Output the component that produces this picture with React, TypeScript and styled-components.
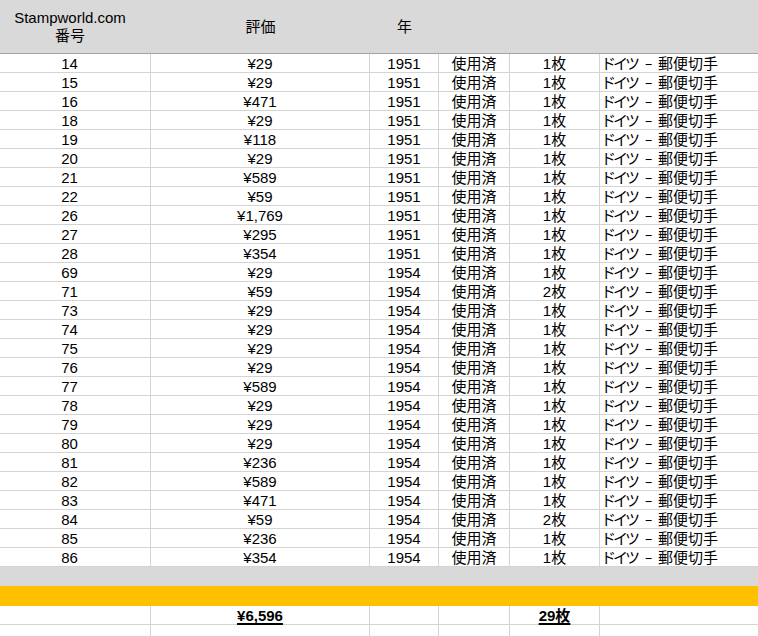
import React from "react";
import styled, { createGlobalStyle } from "styled-components";

const GlobalStyle = createGlobalStyle`
  html, body {
    margin: 0;
    padding: 0;
    background: #ffffff;
  }
  body {
    font-family: "Liberation Sans", "Noto Sans CJK JP", sans-serif;
    font-size: 15px;
    color: #000;
  }
`;

const COLS = "151px 219px 69px 71px 90px 1fr";

const Sheet = styled.div`
  width: 758px;
  height: 636px;
  overflow: hidden;
  display: flex;
  flex-direction: column;
`;

const HeaderRow = styled.div`
  display: grid;
  grid-template-columns: ${COLS};
  height: 54px;
  flex-shrink: 0;
  box-sizing: border-box;
  background: #d9d9d9;
  border-bottom: 1px solid #a3a3a3;
`;

const HeaderCell = styled.div<{ $shift?: boolean }>`
  display: flex;
  align-items: center;
  justify-content: center;
  text-align: center;
  line-height: 18px;
  padding-right: ${(p) => (p.$shift ? "11px" : "0")};
  padding-top: 1px;
`;

const Row = styled.div<{ $height?: number }>`
  display: grid;
  grid-template-columns: ${COLS};
  height: ${(p) => p.$height ?? 19}px;
  flex-shrink: 0;
`;

const Cell = styled.div<{ $align?: "center" | "left"; $shift?: boolean }>`
  box-sizing: border-box;
  border-right: 1px solid #d4d4d4;
  border-bottom: 1px solid #d4d4d4;
  display: flex;
  align-items: center;
  justify-content: ${(p) => (p.$align === "left" ? "flex-start" : "center")};
  padding-left: ${(p) => (p.$align === "left" ? "1px" : "0")};
  padding-right: ${(p) => (p.$shift ? "11px" : "0")};
  padding-top: 1px;
  line-height: 17px;
  white-space: nowrap;
  &:last-child {
    border-right: none;
  }
`;

const Kana = styled.span`
  letter-spacing: -3px;
`;

const Dash = styled.span`
  display: inline-block;
  width: 15px;
  transform: scaleX(0.55);
  margin: 0 2.5px 0 3.5px;
  font-family: "Noto Sans CJK JP", sans-serif;
`;

const Band = styled.div<{ $color: string; $height: number }>`
  height: ${(p) => p.$height}px;
  background: ${(p) => p.$color};
  flex-shrink: 0;
`;

const Total = styled.span`
  font-weight: bold;
  text-decoration: underline;
  text-decoration-thickness: 2px;
  text-underline-offset: 2px;
`;

type Item = { no: number; price: string; year: number; qty: number };

const items: Item[] = [
  { no: 14, price: "¥29", year: 1951, qty: 1 },
  { no: 15, price: "¥29", year: 1951, qty: 1 },
  { no: 16, price: "¥471", year: 1951, qty: 1 },
  { no: 18, price: "¥29", year: 1951, qty: 1 },
  { no: 19, price: "¥118", year: 1951, qty: 1 },
  { no: 20, price: "¥29", year: 1951, qty: 1 },
  { no: 21, price: "¥589", year: 1951, qty: 1 },
  { no: 22, price: "¥59", year: 1951, qty: 1 },
  { no: 26, price: "¥1,769", year: 1951, qty: 1 },
  { no: 27, price: "¥295", year: 1951, qty: 1 },
  { no: 28, price: "¥354", year: 1951, qty: 1 },
  { no: 69, price: "¥29", year: 1954, qty: 1 },
  { no: 71, price: "¥59", year: 1954, qty: 2 },
  { no: 73, price: "¥29", year: 1954, qty: 1 },
  { no: 74, price: "¥29", year: 1954, qty: 1 },
  { no: 75, price: "¥29", year: 1954, qty: 1 },
  { no: 76, price: "¥29", year: 1954, qty: 1 },
  { no: 77, price: "¥589", year: 1954, qty: 1 },
  { no: 78, price: "¥29", year: 1954, qty: 1 },
  { no: 79, price: "¥29", year: 1954, qty: 1 },
  { no: 80, price: "¥29", year: 1954, qty: 1 },
  { no: 81, price: "¥236", year: 1954, qty: 1 },
  { no: 82, price: "¥589", year: 1954, qty: 1 },
  { no: 83, price: "¥471", year: 1954, qty: 1 },
  { no: 84, price: "¥59", year: 1954, qty: 2 },
  { no: 85, price: "¥236", year: 1954, qty: 1 },
  { no: 86, price: "¥354", year: 1954, qty: 1 },
];

export default function App() {
  return (
    <>
      <GlobalStyle />
      <Sheet>
        <HeaderRow>
          <HeaderCell $shift>
            Stampworld.com
            <br />
            番号
          </HeaderCell>
          <HeaderCell>評価</HeaderCell>
          <HeaderCell>年</HeaderCell>
          <HeaderCell />
          <HeaderCell />
          <HeaderCell />
        </HeaderRow>
        {items.map((it) => (
          <Row key={it.no}>
            <Cell $shift>{it.no}</Cell>
            <Cell>{it.price}</Cell>
            <Cell>{it.year}</Cell>
            <Cell>使用済</Cell>
            <Cell>{it.qty}枚</Cell>
            <Cell $align="left">
              <Kana>ドイツ</Kana>
              <Dash>－</Dash>
              郵便切手
            </Cell>
          </Row>
        ))}
        <Band $color="#d9d9d9" $height={19} />
        <Band $color="#ffc000" $height={20} />
        <Row>
          <Cell $shift />
          <Cell>
            <Total>¥6,596</Total>
          </Cell>
          <Cell />
          <Cell />
          <Cell>
            <Total>29枚</Total>
          </Cell>
          <Cell />
        </Row>
        <Row>
          <Cell $shift />
          <Cell />
          <Cell />
          <Cell />
          <Cell />
          <Cell />
        </Row>
      </Sheet>
    </>
  );
}
